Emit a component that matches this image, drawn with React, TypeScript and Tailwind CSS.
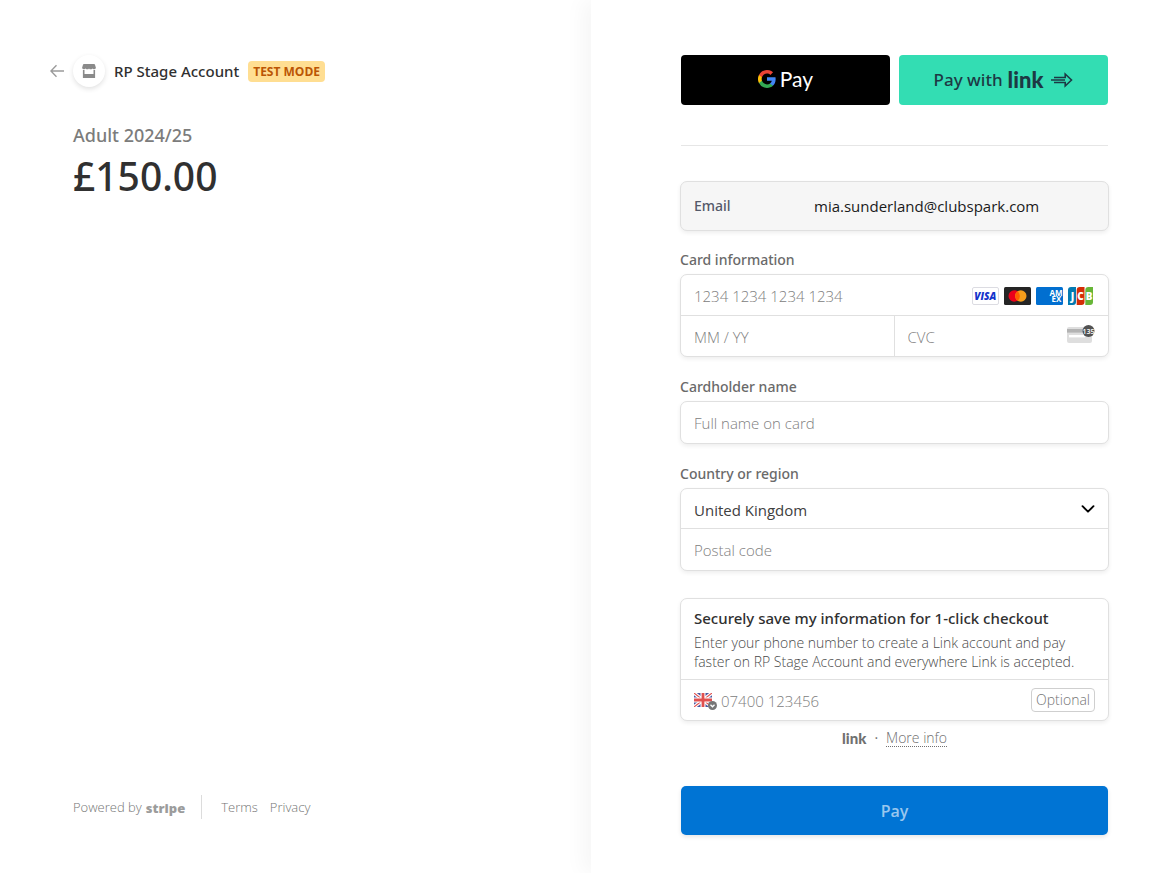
import React from "react";

const box =
  "rounded-[7px] border border-[#e0e0e0] bg-white shadow-[0_2px_4px_rgba(0,0,0,0.07)]";
const input =
  "min-w-0 flex-1 bg-transparent pt-0.5 text-[15px] font-light text-[#303030] outline-none placeholder:text-[#808080] placeholder:opacity-100";
const medium = "font-['Noto_Sans','Open_Sans',sans-serif] font-medium";
const label = `${medium} mb-1 block text-sm leading-5 text-[#6a6a6a]`;

function GoogleIcon() {
  return (
    <svg width="18" height="18" viewBox="0 0 18 18" aria-hidden="true">
      <path fill="#4285f4" d="M17.640 9.200c0-.64-.06-1.250-.16-1.840H9v3.480h4.840a4.140 4.140 0 0 1-1.800 2.720v2.260h2.910c1.700-1.570 2.690-3.880 2.690-6.620z" />
      <path fill="#34a853" d="M9 18c2.430 0 4.470-.8 5.960-2.180l-2.910-2.260c-.81.54-1.840.86-3.050.86-2.340 0-4.330-1.580-5.040-3.710H.96v2.330A9 9 0 0 0 9 18z" />
      <path fill="#fbbc05" d="M3.960 10.710a5.400 5.400 0 0 1 0-3.420V4.960H.96a9 9 0 0 0 0 8.080l3-2.330z" />
      <path fill="#ea4335" d="M9 3.580c1.320 0 2.510.45 3.440 1.350l2.580-2.590A9 9 0 0 0 .96 4.960l3 2.330C4.670 5.160 6.660 3.580 9 3.580z" />
    </svg>
  );
}

function VisaIcon() {
  return (
    <svg width="27" height="18" viewBox="0 0 27 18" role="img" aria-label="Visa">
      <rect x="0.5" y="0.5" width="26" height="17" rx="1.5" fill="#fff" stroke="#dcdce2" />
      <text x="13.2" y="12.6" textAnchor="middle" fontFamily="Open Sans" fontSize="10" fontWeight="800" fontStyle="italic" fill="#1434cb">
        VISA
      </text>
    </svg>
  );
}

function MastercardIcon() {
  return (
    <svg width="27" height="18" viewBox="0 0 27 18" role="img" aria-label="Mastercard">
      <rect width="27" height="18" rx="1.5" fill="#252525" />
      <circle cx="10.2" cy="9" r="5.7" fill="#eb001b" />
      <circle cx="16.8" cy="9" r="5.7" fill="#f79e1b" />
      <path d="M13.5 4.35a5.7 5.7 0 0 1 0 9.3a5.7 5.7 0 0 1 0-9.3z" fill="#ff5f00" />
    </svg>
  );
}

function AmexIcon() {
  return (
    <svg width="27" height="18" viewBox="0 0 27 18" role="img" aria-label="American Express">
      <rect width="27" height="18" rx="1.5" fill="#016fd0" />
      <text fontFamily="Open Sans" fontSize="8" fontWeight="700" fill="#fff">
        <tspan x="13.5" y="8.7">AM</tspan>
        <tspan x="15.5" y="15">EX</tspan>
      </text>
    </svg>
  );
}

function JcbIcon() {
  return (
    <svg width="27" height="18" viewBox="0 0 27 18" role="img" aria-label="JCB">
      <path d="M3 0h5v15a3 3 0 0 1-3 3H0V3a3 3 0 0 1 3-3z" fill="#047ab1" />
      <path d="M11.500 0H16.500v15a3 3 0 0 1-3 3H8.700V3a3 3 0 0 1 3-3z" fill="#d42d06" />
      <path d="M20.500 0H25v15a3 3 0 0 1-3 3h-4.700V3a3 3 0 0 1 3-3z" fill="#67b637" />
      <g fontFamily="Open Sans" fontSize="10" fontWeight="800" fill="#fff" textAnchor="middle">
        <text x="4.5" y="12.6">J</text>
        <text x="12.6" y="12.6">C</text>
        <text x="21" y="12.6">B</text>
      </g>
    </svg>
  );
}

function CvcIcon() {
  return (
    <svg className="mb-1" width="28" height="20" viewBox="0 0 28 20" aria-hidden="true">
      <rect x="0" y="3" width="25" height="16" rx="2" fill="#dedede" />
      <rect x="0" y="5" width="25" height="3.6" fill="#b3b3b3" />
      <rect x="2" y="11" width="16" height="2.4" fill="#fff" />
      <circle cx="21.5" cy="7" r="6" fill="#525252" />
      <text x="21.4" y="9.6" textAnchor="middle" fontFamily="Open Sans" fontSize="7" fontWeight="600" fill="#fff">
        135
      </text>
    </svg>
  );
}

function FlagIcon() {
  return (
    <svg width="23" height="20" viewBox="0 0 23 20" aria-hidden="true">
      <svg x="0" y="3" width="18" height="14" viewBox="0 0 18 14">
        <rect width="18" height="14" fill="#4a57a0" />
        <path d="M0 0l18 14M18 0L0 14" stroke="#fff" strokeWidth="3.4" />
        <path d="M0 0l18 14M18 0L0 14" stroke="#e0504f" strokeWidth="1.1" />
        <path d="M9 0v14M0 7h18" stroke="#fff" strokeWidth="5" />
        <path d="M9 0v14M0 7h18" stroke="#e0504f" strokeWidth="2.8" />
      </svg>
      <circle cx="18.5" cy="15.500" r="4.500" fill="#767676" />
      <path d="M16.500 14.800l2 2l2-2" fill="none" stroke="#fff" strokeWidth="1.300" />
    </svg>
  );
}

function StoreIcon() {
  return (
    <svg width="14" height="14" viewBox="0 0 14 14" aria-hidden="true">
      <path d="M2 0h10a1 1 0 0 1 1 .7l.9 3A1.9 1.9 0 0 1 12 5.2a2 2 0 0 1-1.7-.8 2 2 0 0 1-3.3 0 2 2 0 0 1-3.3 0A2 2 0 0 1 2 5.2 1.9 1.9 0 0 1 .1 3.7l.9-3A1 1 0 0 1 2 0z" fill="#8a8a8a" />
      <path d="M1.7 6v7.2h10.600V6" fill="none" stroke="#8a8a8a" strokeWidth="1.6" />
      <path d="M1.500 10h11v4h-11z" fill="#8a8a8a" />
    </svg>
  );
}

export default function App() {
  return (
    <div className="grid min-h-screen grid-cols-[minmax(0,591fr)_minmax(0,582fr)] bg-white font-['Open_Sans','Noto_Sans',sans-serif]">
      <aside className="flex flex-col justify-between pt-[55px] pb-[54px] pl-[50px]">
        <div>
          <header className="flex h-8 items-center">
            <a href="#back" aria-label="Back" className="w-[23px]">
              <svg width="14" height="14" viewBox="0 0 14 14" fill="none" stroke="#9a9a9a" strokeWidth="1.4" aria-hidden="true">
                <path d="M14 7H1M6.500 1.300L.9 7l5.600 5.700" />
              </svg>
            </a>
            <span className="flex size-8 items-center justify-center rounded-full bg-white shadow-[0_2px_5px_rgba(0,0,0,0.12)]">
              <StoreIcon />
            </span>
            <h1 className={`${medium} ml-[9px] text-[15px] text-[#303030]`}>RP Stage Account</h1>
            <span className="ml-[9px] rounded-[4px] bg-[#ffde92] px-[5px] text-xs leading-[21px] font-bold text-[#bb5504]">
              TEST MODE
            </span>
          </header>
          <div className="mt-9 pl-[23px]">
            <p className={`${medium} text-lg leading-6 text-[#7c7c7c]`}>Adult 2024/25</p>
            <p className={`${medium} text-[39px] leading-[58px] text-[#303030]`}>£150.00</p>
          </div>
        </div>
        <footer className="flex h-6 items-center pl-[23px] text-[13px] font-light text-[#757575]">
          <a href="#stripe" className="flex items-center gap-1 pt-0.5">
            Powered by <span className="text-[13px] leading-5 font-extrabold text-[#9c9c9c]">stripe</span>
          </a>
          <span className="ml-4 h-6 w-px bg-[#dcdcdc]" />
          <a href="#terms" className="ml-[19px] pt-0.5">Terms</a>
          <a href="#privacy" className="ml-3 pt-0.5">Privacy</a>
        </footer>
      </aside>

      <main className="pt-[55px] pr-16 pb-[38px] pl-[89px] shadow-[-8px_0_20px_rgba(0,0,0,0.04)]">
        <form onSubmit={(e) => e.preventDefault()}>
          <div className="mx-px grid grid-cols-2 gap-[9px]">
            <button type="button" aria-label="Google Pay" className="flex h-[50px] items-center justify-center gap-1 rounded-[4px] bg-black pb-0.5 text-white">
              <GoogleIcon />
              <span className="font-['Lato',sans-serif] text-[21px] leading-6">Pay</span>
            </button>
            <button type="button" className="flex h-[50px] items-center justify-center rounded-[4px] bg-[#33ddb3] text-[#1d3944]">
              <span className={`${medium} text-[17px]`}>Pay with</span>
              <span className="ml-[5px] font-['Lato',sans-serif] text-[22px] leading-6 font-black">link</span>
              <svg className="ml-2" width="22" height="16" viewBox="0 0 22 16" fill="none" stroke="#1d3944" strokeWidth="1.6" aria-hidden="true">
                <path d="M3 5.500H14.200V2L20.500 8L14.200 14V10.500H3M0 8H14" />
              </svg>
            </button>
          </div>
          <hr className="mx-px mt-10 border-t border-[#e6e6e6]" />

          <div className={`${box} mt-[35px] flex h-[50px] items-center !bg-[#f6f6f6] px-[13px]`}>
            <span className={`${medium} w-[120px] shrink-0 text-sm text-[#545969]`}>Email</span>
            <span className="text-[15px] text-[#1a1a1a]">mia.sunderland@clubspark.com</span>
          </div>

          <label htmlFor="card" className={`${label} mt-[19px]`}>Card information</label>
          <div className={box}>
            <div className="flex h-[41px] items-center border-b border-[#e0e0e0] px-[13px]">
              <input id="card" placeholder="1234 1234 1234 1234" className={input} />
              <span className="flex gap-[5px] pt-px">
                <VisaIcon />
                <MastercardIcon />
                <AmexIcon />
                <JcbIcon />
              </span>
            </div>
            <div className="grid h-10 grid-cols-2">
              <div className="flex items-center border-r border-[#e0e0e0] px-[13px]">
                <input aria-label="Expiration" placeholder="MM / YY" className={input} />
              </div>
              <div className="flex items-center px-[13px]">
                <input aria-label="CVC" placeholder="CVC" className={input} />
                <CvcIcon />
              </div>
            </div>
          </div>

          <label htmlFor="name" className={`${label} mt-5`}>Cardholder name</label>
          <div className={`${box} flex h-[43px] items-center px-[13px]`}>
            <input id="name" placeholder="Full name on card" className={input} />
          </div>

          <label htmlFor="country" className={`${label} mt-5`}>Country or region</label>
          <div className={box}>
            <div className="relative flex h-10 items-center border-b border-[#e0e0e0]">
              <select id="country" defaultValue="United Kingdom" className="h-full w-full appearance-none bg-transparent px-[13px] pt-[3px] text-[15px] text-[#404040] outline-none">
                <option>United Kingdom</option>
              </select>
              <svg className="pointer-events-none absolute right-[13px]" width="14" height="8" viewBox="0 0 14 8" fill="none" stroke="#000" strokeWidth="1.900" strokeLinecap="round" strokeLinejoin="round" aria-hidden="true">
                <path d="M1.500 1.200L7 6.700l5.500-5.500" />
              </svg>
            </div>
            <div className="flex h-[41px] items-center px-[13px]">
              <input aria-label="Postal code" placeholder="Postal code" className={input} />
            </div>
          </div>

          <section className={`${box} mt-[27px]`}>
            <div className="h-[81px] border-b border-[#e0e0e0] px-[13px] pt-2">
              <h2 className={`${medium} text-[15px] leading-[22px] text-[#303030]`}>
                Securely save my information for 1-click checkout
              </h2>
              <p className="mt-1 text-sm leading-[19px] font-light text-[#4a4a4a]">
                Enter your phone number to create a Link account and pay faster on RP Stage Account and everywhere Link is accepted.
              </p>
            </div>
            <div className="flex h-10 items-center px-[13px]">
              <FlagIcon />
              <input aria-label="Phone number" type="tel" placeholder="07400 123456" className={`${input} ml-1`} />
              <span className="rounded-[4px] border border-[#cfcfcf] px-1 text-sm leading-[22px] font-light text-[#757575]">
                Optional
              </span>
            </div>
          </section>

          <div className="mt-[7px] flex h-5 items-center justify-center gap-2 text-[#707070]">
            <span className="font-['Lato',sans-serif] text-[15px] font-black">link</span>
            <span className="text-sm">·</span>
            <a href="#more" className="border-b border-dotted border-[#707070] text-sm leading-4 font-light">
              More info
            </a>
          </div>

          <div className="mx-px mt-[38px]">
            <button type="submit" className="h-[49px] w-full rounded-[5px] bg-[#0074d4] text-base font-semibold text-[#99c7ee] shadow-[0_2px_4px_rgba(0,0,0,0.1)]">
              Pay
            </button>
          </div>
        </form>
      </main>
    </div>
  );
}
